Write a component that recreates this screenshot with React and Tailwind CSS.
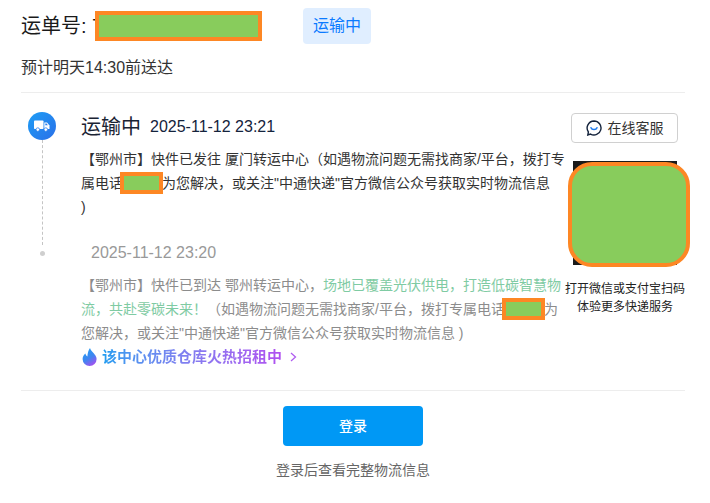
import React from "react";

const Mask = ({ className = "" }) => (
  <span className={"inline-block align-middle box-border border-4 border-[#fd8724] bg-[#88cc5c] " + className} />
);

export default function App() {
  return (
    <div className="w-[710px] h-[503px] bg-white overflow-hidden pl-[21px] pr-[25px] text-[#333] font-['Liberation_Sans','Noto_Sans_CJK_SC',sans-serif]">
      <header className="h-[93px] border-b border-[#ededed] pt-[8px]">
        <div className="flex items-center h-[36px]">
          <div className="relative flex items-center w-[282px] text-[20px] text-[#1a1a1a] leading-none">
            运单号: 7
            <Mask className="absolute left-[74px] top-[-5px] w-[167px] h-[30px]" />
          </div>
          <span className="flex items-center justify-center w-[68px] h-[36px] rounded-[4px] bg-[#e0eeff] text-[#0a7aff] text-[16px]">运输中</span>
        </div>
        <p className="mt-[12px] text-[16px] leading-[24px] text-[#333]">预计明天14:30前送达</p>
      </header>

      <main className="h-[298px] flex border-b border-[#ededed]">
        <div className="w-[42px] mr-[18px] shrink-0 flex flex-col items-center pt-[19px]">
          <div className="w-[28px] h-[28px] rounded-full bg-gradient-to-br from-[#1c9df5] to-[#2a6fe8] flex items-center justify-center">
            <svg width="16" height="12" viewBox="0 0 16 12" fill="#fff">
              <rect x="0" y="0.5" width="9.5" height="8.500" rx="0.8" />
              <path d="M10.300 2.500h2.700l2.500 3v3.500h-5.200z" />
              <path d="M11.300 3.500h1.300l1.300 1.700h-2.600z" fill="#2a7fee" />
              <circle cx="3.800" cy="9.600" r="1.800" stroke="#2b7fee" strokeWidth="0.8" />
              <circle cx="11.800" cy="9.600" r="1.800" stroke="#2b7fee" strokeWidth="0.8" />
            </svg>
          </div>
          <div className="w-0 h-[105px] border-l border-dashed border-[#c4c4c4]" />
          <div className="w-[5px] h-[5px] mt-[6px] rounded-full bg-[#cfcfcf]" />
        </div>

        <div className="w-[492px] shrink-0 pt-[20px]">
          <div className="flex items-center h-[28px]">
            <span className="text-[20px] text-[#1a2333] leading-none">运输中</span>
            <span className="ml-[9px] text-[16px] text-[#14233c] leading-none">2025-11-12 23:21</span>
          </div>
          <p className="mt-[6px] text-[14px] leading-[24px] text-[#333] whitespace-nowrap">
            【鄂州市】快件已发往 厦门转运中心（如遇物流问题无需找商家/平台，拨打专<br />
            属电话<Mask className="w-[43px] h-[22px] -mt-[2px] -ml-[3px] -mr-[1px]" />为您解决，或关注"中通快递"官方微信公众号获取实时物流信息<br />
            )
          </p>
          <div className="mt-[22px] ml-[10px] h-[24px] flex items-center text-[16px] text-[#999] leading-none">2025-11-12 23:20</div>
          <p className="mt-[8px] text-[14px] leading-[24px] text-[#8c8c8c] whitespace-nowrap">
            【鄂州市】快件已到达 鄂州转运中心，<span className="text-[#7fcba3]">场地已覆盖光伏供电，打造低碳智慧物<br />流，共赴零碳未来！</span>（如遇物流问题无需找商家/平台，拨打专属电话<Mask className="w-[43px] h-[22px] -mt-[2px] -ml-[3px] -mr-[1px]" />为<br />
            您解决，或关注"中通快递"官方微信公众号获取实时物流信息 )
          </p>
          <div className="h-[24px] flex items-center">
            <svg width="15" height="18" viewBox="0 0 15 18" className="mr-[5px] ml-[1px]">
              <defs>
                <linearGradient id="dropG" x1="0.2" y1="0" x2="0.7" y2="1">
                  <stop offset="0" stopColor="#1f9ff5" />
                  <stop offset="0.55" stopColor="#3f86f0" />
                  <stop offset="1" stopColor="#a64ff0" />
                </linearGradient>
              </defs>
              <path d="M8 0c.6 3.400 6.600 6.400 6.600 11a7 7 0 0 1-14 0C.6 8.600 2 7 3.400 5.600c.3 1.400 1 2.400 2 2.800C5.600 5 6.400 2.400 8 0z" fill="url(#dropG)" />
            </svg>
            <span className="text-[15px] font-bold bg-gradient-to-r from-[#1c9df0] to-[#b04ff0] bg-clip-text text-transparent">该中心优质仓库火热招租中</span>
            <svg width="7" height="10" viewBox="0 0 7 10" fill="none" stroke="#b05df0" strokeWidth="1.3" className="ml-[8px]">
              <path d="M1 1l4.500 4-4.500 4" />
            </svg>
          </div>
        </div>

        <aside className="flex-1 flex flex-col pt-[20px]">
          <button className="w-[107px] h-[30px] rounded-[4px] border border-[#d0d0d0] bg-white flex items-center justify-center gap-[6px] text-[14px] text-[#333] -ml-[2px]">
            <svg width="16" height="16" viewBox="0 0 16 16" fill="none">
              <path d="M8 1a7 7 0 1 1-3.500 13.060L1.800 15l.6-3A7 7 0 0 1 8 1z" stroke="#14233c" strokeWidth="1.400" />
              <path d="M5 7.800c.8 2.400 5.200 2.400 6 0" stroke="#1f7cf0" strokeWidth="1.500" strokeLinecap="round" />
            </svg>
            在线客服
          </button>
          <div className="relative w-[104px] h-[104px] mt-[18px] bg-[#1a1a1a] shrink-0">
            <Mask className="absolute left-[-5px] top-[1px] w-[122px] h-[105px] rounded-[24px]" />
          </div>
          <p className="w-[120px] -ml-[8px] mt-[15px] text-[12px] leading-[18px] text-center text-[#222]">
            打开微信或支付宝扫码<br />体验更多快递服务
          </p>
        </aside>
      </main>

      <footer className="flex flex-col items-center pt-[15px]">
        <button className="w-[140px] h-[40px] rounded-[4px] bg-[#0098f5] text-white text-[14px] font-medium">登录</button>
        <p className="mt-[14px] text-[14px] leading-[20px] text-[#666]">登录后查看完整物流信息</p>
      </footer>
    </div>
  );
}
